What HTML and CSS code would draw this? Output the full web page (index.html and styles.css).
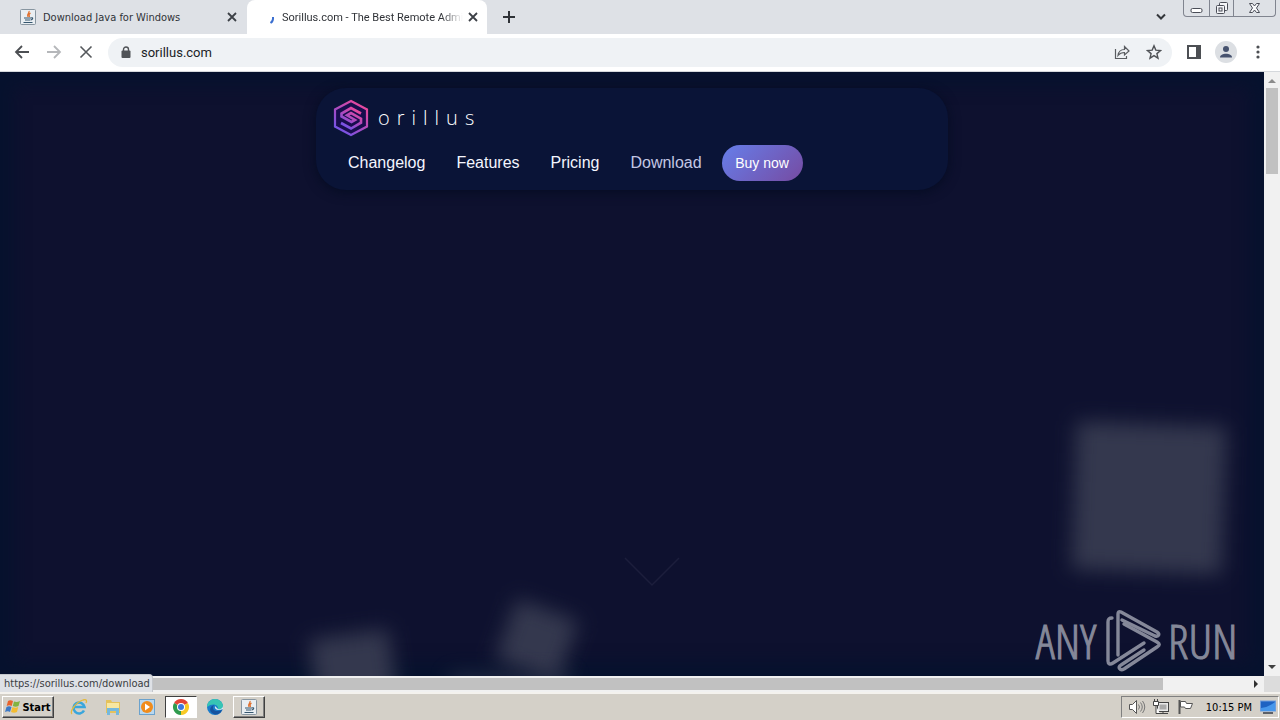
FILE: index.html
```html
<!DOCTYPE html>
<html lang="en">
<head>
<meta charset="utf-8">
<title>Sorillus.com - The Best Remote Administration</title>
<link rel="stylesheet" href="styles.css">
</head>
<body>
<svg class="defs" width="0" height="0" aria-hidden="true">
  <defs>
    <symbol id="close" viewBox="0 0 10 10"><path d="M1 1l8 8M9 1L1 9" stroke="currentColor" stroke-width="1.8" fill="none"/></symbol>
    <symbol id="java" viewBox="0 0 18 18">
      <rect x="1.500" y="1.500" width="15" height="15" rx="1" fill="#e9eef2" stroke="#8795a0"/>
      <path d="M10 3c1 2-3 3-1 6M11.500 5c-2 1-2 2-1 4" stroke="#e0702e" stroke-width="1.300" fill="none"/>
      <path d="M5 10h7M6 12h5.500M4.500 14.500h9M12 10c2-1 2.500 1 0 2" stroke="#35566f" stroke-width="1.200" fill="none"/>
    </symbol>
  </defs>
</svg>

<header class="tabstrip">
  <div class="tab">
    <svg class="favicon" width="18" height="18"><use href="#java"/></svg>
    <span class="tab-title">Download Java for Windows</span>
    <button class="tab-close" aria-label="Close tab"><svg width="10" height="10"><use href="#close"/></svg></button>
  </div>
  <div class="tab tab-active">
    <svg class="favicon" width="18" height="18" viewBox="0 0 18 18"><path d="M11.500 15q3-2 2.500-6" fill="none" stroke="#3b6fd0" stroke-width="2"/></svg>
    <span class="tab-title tab-fade">Sorillus.com - The Best Remote Admi</span>
    <button class="tab-close" aria-label="Close tab"><svg width="10" height="10"><use href="#close"/></svg></button>
  </div>
  <button class="new-tab" aria-label="New tab"><svg width="12" height="12" viewBox="0 0 12 12"><path d="M6 0v12M0 6h12" stroke="#2f3237" stroke-width="2"/></svg></button>
  <button class="tab-search" aria-label="Search tabs"><svg width="10" height="8" viewBox="0 0 10 8"><path d="M1 1.500l4 4 4-4" fill="none" stroke="#34373b" stroke-width="2"/></svg></button>
  <div class="window-buttons">
    <button class="win-min" aria-label="Minimize"><svg width="13" height="16" viewBox="0 0 13 16"><rect x="1" y="8.500" width="11" height="4" rx="1.500" fill="#fff" stroke="#4a4d57"/></svg></button>
    <button class="win-max" aria-label="Restore"><svg width="14" height="16" viewBox="0 0 14 16"><g fill="#f4f5f8" stroke="#4a4d57"><rect x="4.500" y="2.500" width="8" height="8" rx="1"/><rect x="1.500" y="5.500" width="8" height="8" rx="1"/><rect x="4" y="8" width="3" height="3"/></g></svg></button>
    <button class="win-close" aria-label="Close"><svg width="13" height="16" viewBox="0 0 13 16"><path d="M1.500 3.500h3l2 2.500 2-2.500h3L8.500 8l3 4.500h-3l-2-2.500-2 2.500h-3l3-4.500z" fill="#f8f9fb" stroke="#4a4d57"/></svg></button>
  </div>
</header>

<div class="toolbar">
  <button class="tool" aria-label="Back"><svg width="16" height="14" viewBox="0 0 16 14"><path d="M15 7H2M8 1L2 7l6 6" fill="none" stroke="#4c4f53" stroke-width="1.800"/></svg></button>
  <button class="tool" aria-label="Forward"><svg width="16" height="14" viewBox="0 0 16 14"><path d="M1 7h13M8 1l6 6-6 6" fill="none" stroke="#b5b7ba" stroke-width="1.800"/></svg></button>
  <button class="tool" aria-label="Stop"><svg width="14" height="14" viewBox="0 0 14 14"><path d="M1.500 1.500l11 11M12.500 1.500l-11 11" stroke="#55585c" stroke-width="1.600"/></svg></button>
  <div class="omnibox">
    <svg width="10" height="13" viewBox="0 0 10 13"><path d="M2.500 5V3.500a2.500 2.500 0 0 1 5 0V5" fill="none" stroke="#505357" stroke-width="1.400"/><rect x="0.500" y="4.500" width="9" height="7.500" rx="1" fill="#505357"/></svg>
    <input class="address" type="text" aria-label="Address" value="sorillus.com">
    <button class="omni-button" aria-label="Share"><svg width="16" height="16" viewBox="0 0 16 16"><path d="M1.500 5v9.500h11V12M4 11.500c.5-4 3-6 6.500-6V2.500L15 7l-4.500 4V8.500c-3 0-4.800.8-6.500 3z" fill="none" stroke="#5a5d61" stroke-width="1.200"/></svg></button>
    <button class="omni-button" aria-label="Bookmark"><svg width="16" height="16" viewBox="0 0 16 16"><path d="M8 1.800l1.800 4.300 4.700.4-3.600 3.100 1.100 4.600L8 11.700l-4 2.500 1.100-4.600-3.600-3.100 4.700-.4z" fill="none" stroke="#4f5256" stroke-width="1.400"/></svg></button>
  </div>
  <button class="tool" aria-label="Side panel"><svg width="14" height="14" viewBox="0 0 14 14"><path d="M0 0h14v14H0zM2 2v10h7V2z" fill="#4c4f53" fill-rule="evenodd"/></svg></button>
  <button class="tool" aria-label="Profile"><svg width="22" height="22" viewBox="0 0 22 22"><circle cx="11" cy="11" r="11" fill="#dcdfe3"/><circle cx="11" cy="8" r="3" fill="#46526e"/><path d="M5 16.500c0-5 12-5 12 0z" fill="#46526e"/></svg></button>
  <button class="tool" aria-label="Menu"><svg width="4" height="14" viewBox="0 0 4 14"><g fill="#4c4f53"><circle cx="2" cy="2" r="1.600"/><circle cx="2" cy="7" r="1.600"/><circle cx="2" cy="12" r="1.600"/></g></svg></button>
</div>

<div class="view">
  <main class="page">
    <span class="square square-large"></span>
    <span class="square square-left"></span>
    <span class="square square-mid"></span>
    <span class="square square-low"></span>
    <nav class="navbar">
      <a class="brand" href="#" aria-label="Sorillus">
        <svg width="36" height="38" viewBox="0 0 36 38">
          <defs><linearGradient id="brand-fill" x1="0" y1="1" x2="0.700" y2="0"><stop offset="0" stop-color="#6257f5"/><stop offset="0.500" stop-color="#a34bc4"/><stop offset="1" stop-color="#e8489c"/></linearGradient></defs>
          <path d="M18 2L34 10.500v17L18 36 2 27.500v-17z" fill="#170d4d" stroke="url(#brand-fill)" stroke-width="2.200"/>
          <path d="M28 14.500L18 9 8.500 14.500v3L18.500 23l3.500-2-8-4.700 4-2.300 10 5.700v4L18 29.500 8 24" fill="none" stroke="url(#brand-fill)" stroke-width="2.600"/>
        </svg>
        <span class="brand-name">orillus</span>
      </a>
      <div class="links">
        <a href="#">Changelog</a>
        <a href="#">Features</a>
        <a href="#">Pricing</a>
        <a class="hovered" href="#">Download</a>
        <button class="buy">Buy now</button>
      </div>
    </nav>
    <svg class="scroll-hint" width="56" height="30" viewBox="0 0 56 30"><path d="M1 1l27 27L55 1" fill="none" stroke="#1c1e3c" stroke-width="1.500"/></svg>
    <div class="watermark">
      <span class="mark-text">ANY</span>
      <svg width="58" height="64" viewBox="0 0 58 64"><g fill="none" stroke="currentColor" stroke-width="3.400" stroke-linejoin="round" stroke-linecap="round">
        <path d="M8 9C5 9 4 10 4 13v39c0 3 2 4 5 2l31-20"/>
        <path d="M14 46V5c0-2 1-3 3-2l36 20c3 2 2 5-2 4L18 11"/>
        <path d="M20 15l33 18c3 2 3 3 0 5L20 60c-4 2-7-2-3-4l23-15"/>
      </g></svg>
      <span class="mark-text">RUN</span>
    </div>
  </main>
  <div class="vscroll">
    <svg width="16" height="16" viewBox="0 0 16 16"><path d="M4 11l4-4 4 4z" fill="#8c8c8c"/></svg>
    <div class="vthumb"></div>
    <svg class="vdown" width="16" height="16" viewBox="0 0 16 16"><path d="M4 5l4 4 4-4z" fill="#404040"/></svg>
  </div>
  <div class="hscroll">
    <div class="hthumb"></div>
    <svg width="16" height="16" viewBox="0 0 16 16"><path d="M6 4l4 4-4 4z" fill="#303030"/></svg>
  </div>
  <div class="corner"></div>
  <div class="status">https://sorillus.com/download</div>
</div>

<footer class="taskbar">
  <button class="start">
    <svg width="16" height="16" viewBox="0 0 16 16"><path d="M3 2q2-1.500 5 0L6.700 7q-2.500-1.500-5 0z" fill="#e9632c"/><path d="M9 2.500q3 1 6-.5L13.500 7q-3 1.500-5.700 0z" fill="#82b340"/><path d="M1.500 8q2.500-1.500 5 0L5 13q-2-1.500-5 0z" fill="#3c79c6"/><path d="M7.500 8q3 1.500 5.700 0L12 13q-3 1.500-6 0z" fill="#f3bc31"/></svg>
    <span>Start</span>
  </button>
  <button class="task" aria-label="Internet Explorer"><svg width="18" height="18" viewBox="0 0 18 18"><path d="M14 12.500A5.500 5.500 0 1 1 14.500 9H5" fill="none" stroke="#39a6dc" stroke-width="2.600"/><path d="M2 16C-1 14 6 4 13 2c4-1 4 1 3 3" fill="none" stroke="#e4b93b" stroke-width="1.300"/></svg></button>
  <button class="task" aria-label="Explorer"><svg width="18" height="18" viewBox="0 0 18 18"><path d="M2 2h5l1 2h8v11H2z" fill="#e5c25c"/><path d="M3 5h12v6H3z" fill="#f8e7a1"/><path d="M3 17v-7h12v7h-3v-4H6v4z" fill="#75b8dd"/></svg></button>
  <button class="task" aria-label="Media Player"><svg width="18" height="18" viewBox="0 0 18 18"><rect x="1.500" y="1.500" width="15" height="15" fill="#b9d8ef" stroke="#6ba2cd"/><circle cx="9" cy="9" r="6" fill="#f08c1c"/><path d="M7 5.500l5 3.500-5 3.500z" fill="#fff"/></svg></button>
  <button class="task pressed" aria-label="Chrome"><svg width="18" height="18" viewBox="0 0 18 18"><path d="M9 9L2.070 5A8 8 0 0 1 15.930 5z" fill="#e24436"/><path d="M9 9L15.930 5A8 8 0 0 1 9 17z" fill="#f8c924"/><path d="M9 9L9 17A8 8 0 0 1 2.070 5z" fill="#2f9b4e"/><circle cx="9" cy="9" r="4" fill="#fff"/><circle cx="9" cy="9" r="3" fill="#3b78de"/></svg></button>
  <button class="task" aria-label="Edge"><svg width="18" height="18" viewBox="0 0 18 18"><circle cx="9" cy="9" r="8" fill="#1a7ccb"/><path d="M1 9C1 4 5 1 9 1c5 0 8 4 8 7 0 2-2 4-5 3.500C13 7 7 4 1 9z" fill="#37c5b4"/><path d="M8 7c-3 4 1 8 8 5-2 5-8 6-11 2-2-3 0-6 3-7z" fill="#16539f"/><path d="M9 8c-1 4 4 5 8 3v-3c0 2-3 4-5 3z" fill="#d9ebf2"/></svg></button>
  <button class="task raised" aria-label="Java"><svg width="18" height="18"><use href="#java"/></svg></button>
  <div class="tray">
    <svg width="18" height="18" viewBox="0 0 18 18"><path d="M1.500 6.500h3l4-4v13l-4-4h-3z" fill="#fff" stroke="#555"/><path d="M10.500 6.500q2 2.500 0 5M12.500 4.500q3.500 4.500 0 9M14.500 3q4.500 6 0 12" fill="none" stroke="#777"/></svg>
    <svg width="18" height="18" viewBox="0 0 18 18"><rect x="5.500" y="4.500" width="11" height="9" fill="#e9e9e9" stroke="#444"/><path d="M7.500 6.500h7v5h-7z" fill="#aaa"/><path d="M8 15.500h8M11 13v3M2.500 1v3M5.500 1v3M1.500 3.500h5v4h-5zM4 8v7.500h4" fill="#fff" stroke="#444"/></svg>
    <svg width="18" height="18" viewBox="0 0 18 18"><path d="M3.500 2v14" stroke="#555" stroke-width="2"/><path d="M4.500 3.500h5l1 2h6l-2 5h-5l-1-1.500h-4z" fill="#fff" stroke="#555"/></svg>
    <time class="clock">10:15 PM</time>
    <svg width="16" height="14" viewBox="0 0 16 14"><rect x="0.500" y="1" width="15" height="10" fill="#1e62c2" stroke="#6e9cdc"/><path d="M1 8q8-1 14-6v9H1z" fill="#4797eb"/><path d="M3 13h10" stroke="#343b48" stroke-width="1.500"/></svg>
  </div>
</footer>
</body>
</html>
```
FILE: styles.css
```css
* { box-sizing: border-box; }

body {
  margin: 0;
  height: 100vh;
  display: flex;
  flex-direction: column;
  overflow: hidden;
  font-family: "DejaVu Sans Condensed", "DejaVu Sans", sans-serif;
  font-size: 11px;
  color: #303338;
}

button {
  display: flex;
  align-items: center;
  justify-content: center;
  padding: 0;
  border: 0;
  background: none;
  color: inherit;
  font: inherit;
}

svg { flex: none; display: block; }
.defs { position: absolute; }

/* Tabs */
.tabstrip {
  display: flex;
  height: 34px;
  flex: none;
  background: #dee1e6;
}

.tab {
  display: flex;
  align-items: center;
  width: 247px;
  padding: 0 10px 0 19px;
  gap: 6px;
}

.tab-active {
  width: 240px;
  padding-left: 12px;
  background: #fff;
  border-radius: 8px 8px 0 0;
  gap: 5px;
}

.tab-title {
  flex: 1;
  white-space: nowrap;
}

.tab-fade {
  font-family: Roboto, sans-serif;
  mask-image: linear-gradient(to right, #000 88%, transparent);
}

.tab-close { width: 11px; height: 16px; color: #3c4046; }
.new-tab { width: 44px; }
.tab-search { width: 24px; margin-left: auto; margin-right: 10px; }

.window-buttons {
  display: flex;
  width: 93px;
  height: 17px;
  margin-right: 4px;
  border: 1px solid #80848f;
  border-top: 0;
  border-radius: 0 0 4px 4px;
}

.win-min { width: 25px; }
.win-max { width: 25px; border: solid #80848f; border-width: 0 1px; }
.win-close { flex: 1; }

/* Toolbar */
.toolbar {
  display: flex;
  align-items: center;
  flex: none;
  height: 38px;
  padding: 0 6px 1px;
  background: #fff;
  border-bottom: 1px solid #d5d8dc;
}

.tool { width: 32px; height: 28px; }

.omnibox {
  display: flex;
  align-items: center;
  flex: 1;
  height: 29px;
  margin: 0 6px;
  padding: 0 2px 0 13px;
  background: #eff2f5;
  border-radius: 15px;
}

.address {
  flex: 1;
  min-width: 0;
  padding: 0 0 0 10px;
  border: 0;
  outline: 0;
  background: none;
  font-family: Roboto, sans-serif;
  font-size: 13px;
  color: #202226;
}

.omni-button { width: 32px; height: 28px; }

/* Viewport and its scroll bars */
.view {
  position: relative;
  display: grid;
  flex: 1;
  min-height: 0;
  grid-template-columns: 1fr 16px;
  grid-template-rows: 1fr 16px;
}

.page {
  position: relative;
  overflow: hidden;
  padding-top: 16px;
  background: #0e112f;
  box-shadow: inset 0 0 16px 14px #07122e;
  font-family: "Liberation Sans", Arial, sans-serif;
}

.navbar {
  position: relative;
  width: 50%;
  margin: 0 auto;
  padding: 11px 17px 0;
  border-radius: 30px;
  background: #0a1437;
  box-shadow: 0 2px 12px #050c22;
}

.brand {
  display: flex;
  align-items: center;
  gap: 9px;
  color: #fff;
  text-decoration: none;
}

.brand-name {
  font-family: "Open Sans", "Liberation Sans", sans-serif;
  font-weight: 300;
  font-size: 20px;
  line-height: 38px;
  letter-spacing: 7px;
}

.links {
  display: flex;
  align-items: center;
  gap: 31px;
  padding: 8px 15px 9px;
  font-size: 16px;
}

.links a { color: #f4f6ff; text-decoration: none; }
.links .hovered { color: #c3c7e4; }

.buy {
  width: 81px;
  height: 36px;
  margin-left: -11px;
  border-radius: 18px;
  background: linear-gradient(135deg, #667eea, #764ba2);
  color: #fff;
  font-size: 14px;
}

.square {
  position: absolute;
  background: #34384e;
  filter: blur(10px);
}

.square-large { right: 40px; bottom: 104px; width: 150px; height: 148px; transform: rotate(2deg); }
.square-left { left: 314px; bottom: -38px; width: 80px; height: 80px; transform: rotate(-8deg); }
.square-mid { left: 504px; bottom: 4px; width: 66px; height: 64px; transform: rotate(20deg); }
.square-low { left: 450px; bottom: -26px; width: 120px; height: 28px; opacity: 0.6; }

.scroll-hint { position: absolute; left: 624px; bottom: 89px; }

.watermark {
  position: absolute;
  right: 32px;
  bottom: 3px;
  display: flex;
  align-items: center;
  gap: 6px;
  color: #858899;
}

.mark-text {
  width: 64px;
  text-align: center;
  font-family: "Open Sans Condensed Light", "Roboto Condensed Light", "Liberation Sans Narrow", sans-serif;
  font-weight: 300;
  font-size: 48px;
  line-height: 64px;
  -webkit-text-stroke: 1px;
}

.vscroll {
  display: flex;
  flex-direction: column;
  background: #f1f1f1;
}

.vthumb { height: 86px; margin: 0 2px; background: #c1c1c1; }
.vdown { margin-top: auto; }

.hscroll {
  display: flex;
  align-items: center;
  background: #f1f1f1;
}

.hthumb { width: 92%; height: 12px; background: #c1c1c1; }
.hscroll svg { margin-left: auto; }
.corner { background: #dcdcdc; }

.status {
  position: absolute;
  left: 0;
  bottom: 0;
  width: 153px;
  height: 18px;
  padding-left: 4px;
  background: #dee1e6;
  border: solid #c3c6cb;
  border-width: 1px 1px 0 0;
  border-radius: 0 4px 0 0;
  line-height: 17px;
  color: #3a3d42;
}

/* Taskbar */
.taskbar {
  display: flex;
  align-items: center;
  flex: none;
  height: 28px;
  padding: 0 1px 0 2px;
  background: #d4d0c8;
  border-top: 2px solid #f4f2ee;
}

.start, .raised {
  height: 22px;
  border: 1px solid;
  border-color: #fff #404040 #404040 #fff;
  box-shadow: inset -1px -1px #808080;
}

.start {
  width: 52px;
  margin-right: 9px;
  gap: 1px;
  font-family: "DejaVu Sans Condensed", "DejaVu Sans", sans-serif;
  font-weight: bold;
  color: #000;
}

.task { width: 32px; height: 22px; margin-right: 2px; }

.pressed {
  background: #fff;
  border: 1px solid;
  border-color: #404040 #fff #fff #404040;
}

.tray {
  display: flex;
  align-items: center;
  height: 22px;
  margin-left: auto;
  padding: 0 2px 0 6px;
  gap: 6px;
  border: 1px solid;
  border-color: #808080 #fff #fff #808080;
  color: #000;
}

.clock { margin: 0 2px 0 6px; }
```
